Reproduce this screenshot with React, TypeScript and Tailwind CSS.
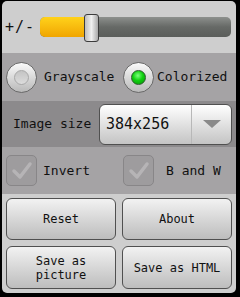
import React from "react";

const mono = { fontFamily: '"DejaVu Sans Mono", monospace' };

function Radio({ checked }: { checked?: boolean }) {
  return (
    <div className="w-[31px] h-[31px] rounded-full border border-[#6a6a6a] bg-gradient-to-b from-[#fbfbfb] to-[#b9b9b9] flex items-center justify-center shrink-0">
      {checked ? (
        <div className="w-[15px] h-[15px] rounded-full border border-[#2a5a2a] bg-[radial-gradient(circle_at_45%_35%,#7dff7d,#10d010_45%,#089008)]" />
      ) : (
        <div className="w-[15px] h-[15px] rounded-full border border-[#a8a8a8] bg-gradient-to-b from-[#c4c4c4] to-[#dcdcdc]" />
      )}
    </div>
  );
}

function Check() {
  return (
    <div className="w-[31px] h-[31px] rounded-[5px] border border-[#888688] bg-[#9e9c9e] flex items-center justify-center shrink-0">
      <svg width="22" height="20" viewBox="0 0 22 20">
        <path d="M3 10 L9 16 L19 3" fill="none" stroke="#b6b4b6" strokeWidth="3.5" strokeLinecap="round" strokeLinejoin="round" />
      </svg>
    </div>
  );
}

function Btn({ children }: { children: React.ReactNode }) {
  return (
    <div
      className="flex-1 rounded-[6px] border border-[#505050] bg-gradient-to-b from-[#f2f2f2] to-[#bdbdbd] flex items-center justify-center text-center text-[12px] leading-[14px] text-[#111]"
      style={mono}
    >
      {children}
    </div>
  );
}

export default function App() {
  return (
    <div className="w-[240px] h-[297px] bg-black pl-[2px] pt-[1px] pr-[4px] pb-[4px]">
      <div className="h-full rounded-[5px] overflow-hidden bg-[#cecece] flex flex-col" style={mono}>
        <div className="h-[52px] flex items-center pl-[2px] pr-[5px] gap-[6px]">
          <span className="shrink-0 text-[15px] tracking-[1px] text-[#111] w-[30px] pl-[1px] whitespace-nowrap overflow-visible">+/-</span>
          <div className="relative flex-1 h-[20px] rounded-[5px] bg-gradient-to-b from-[#8d908d] via-[#666966] to-[#5b5e5b]">
            <div className="absolute left-0 top-0 h-full w-[46px] rounded-l-[5px] bg-gradient-to-b from-[#ffd21a] to-[#f0a500]" />
            <div className="absolute left-[44px] top-[-3px] w-[15px] h-[28px] rounded-[3px] border border-[#3c3c3c] bg-gradient-to-r from-[#bdbdbd] via-[#f0f0f0] to-[#a9a9a9]" />
          </div>
        </div>
        <div className="h-[48px] bg-[#a5a3a5] flex items-center pl-[4px] text-[13px] text-[#111]">
          <Radio />
          <span className="ml-[7px] w-[79px]">Grayscale</span>
          <Radio checked />
          <span className="ml-[3px]">Colorized</span>
        </div>
        <div className="h-[46px] bg-[#8c8a8c] flex items-center pl-[11px] text-[13px] text-[#111]">
          <span className="w-[86px]">Image size</span>
          <div className="w-[133px] h-[41px] rounded-[6px] border border-[#505050] bg-gradient-to-b from-[#ffffff] to-[#c4c4c4] flex">
            <span className="flex-1 flex items-center pl-[6px] text-[15px]">384x256</span>
            <div className="w-[40px] border-l border-[#b8b8b8] flex items-center justify-center">
              <svg width="20" height="10" viewBox="0 0 20 10">
                <path d="M1 1 H19 L10 9 Z" fill="#8a8a8a" />
              </svg>
            </div>
          </div>
        </div>
        <div className="h-[47px] bg-[#a5a3a5] flex items-center pl-[4px] text-[13px] text-[#111]">
          <Check />
          <span className="ml-[6px] w-[80px]">Invert</span>
          <Check />
          <span className="ml-[12px]">B and W</span>
        </div>
        <div className="flex-1 flex flex-col gap-[6px] px-[4px] pt-[4px] pb-[4px]">
          <div className="flex gap-[6px] h-[42px]">
            <Btn>Reset</Btn>
            <Btn>About</Btn>
          </div>
          <div className="flex gap-[6px] h-[43px]">
            <Btn>
              Save as
              <br />
              picture
            </Btn>
            <Btn>Save as HTML</Btn>
          </div>
        </div>
      </div>
    </div>
  );
}
